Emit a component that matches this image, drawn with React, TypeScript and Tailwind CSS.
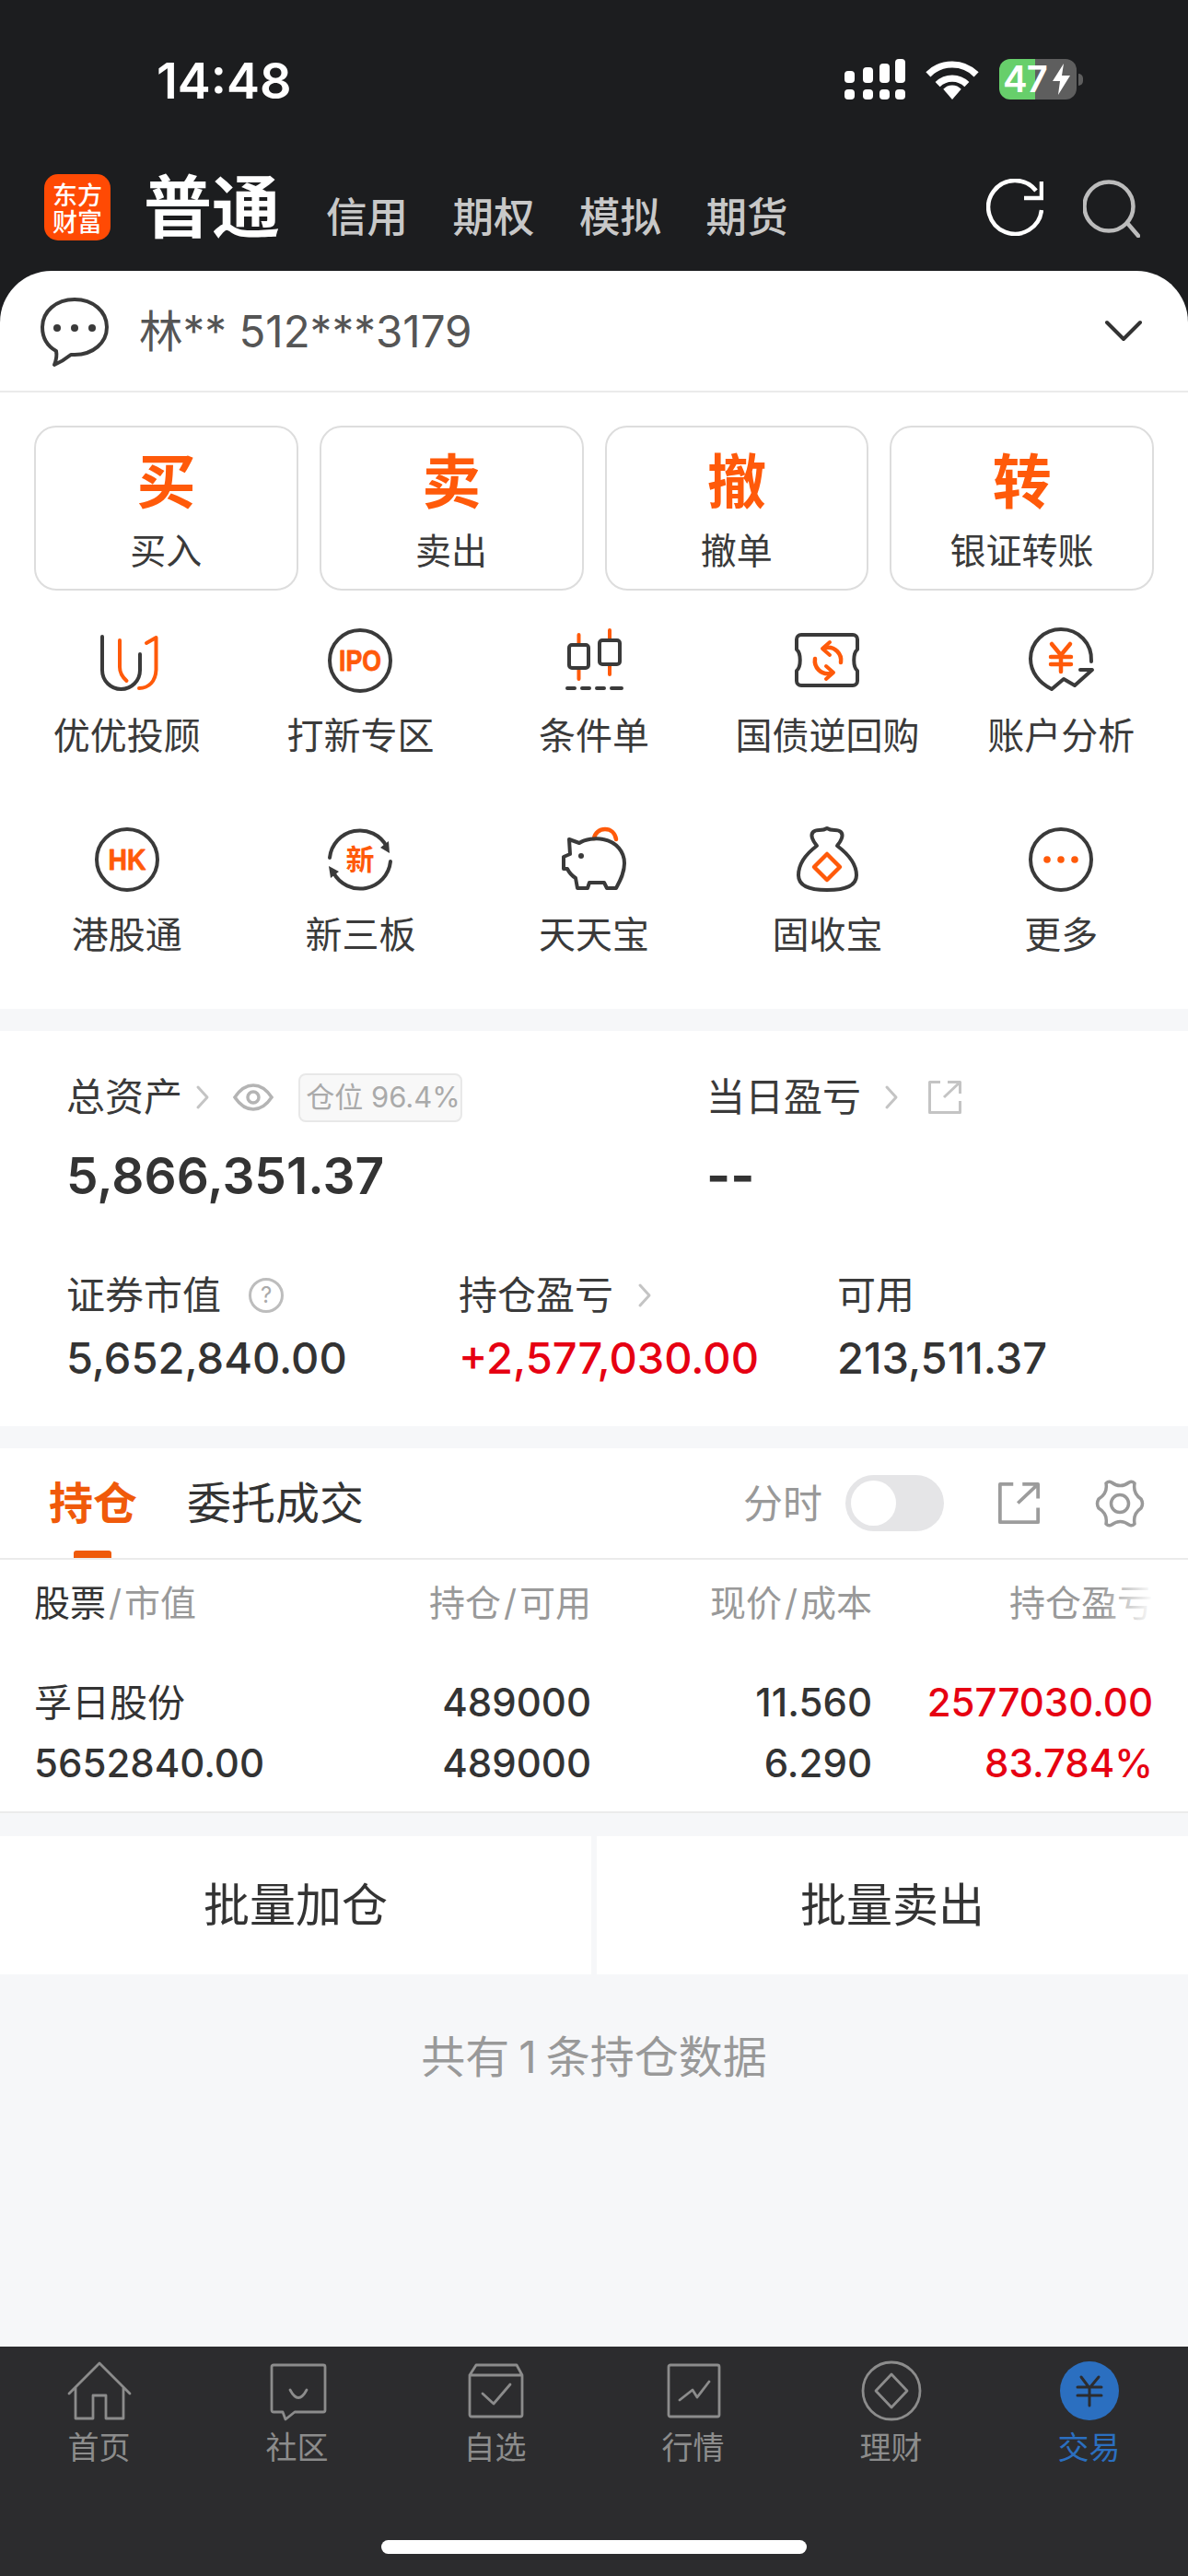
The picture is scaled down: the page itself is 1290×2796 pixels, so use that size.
import type { ReactNode } from "react";

const FONT = "font-['Inter','Noto_Sans_CJK_SC',sans-serif]";
const DARK = "#3a3a3a";
const ORANGE = "#ff5a0a";

function Icon({ children, size = 80 }: { children: ReactNode; size?: number }) {
  return (
    <svg width={size} height={size} viewBox={`0 0 ${size} ${size}`} fill="none" strokeLinecap="round" strokeLinejoin="round">
      {children}
    </svg>
  );
}

function SignalIcon() {
  return (
    <svg width="66" height="44" viewBox="0 0 66 44" fill="white">
      <rect x="0" y="13" width="11" height="13" rx="4" />
      <rect x="20" y="9" width="11" height="17" rx="4" />
      <rect x="38" y="5" width="11" height="21" rx="4" />
      <rect x="55" y="0" width="11" height="26" rx="4" />
      <rect x="0" y="33" width="11" height="11" rx="4" />
      <rect x="20" y="33" width="11" height="11" rx="4" />
      <rect x="38" y="33" width="11" height="11" rx="4" />
      <rect x="55" y="33" width="11" height="11" rx="4" />
    </svg>
  );
}

function WifiIcon() {
  return (
    <svg width="60" height="43" viewBox="0 0 57 42" fill="none" stroke="white">
      <path d="M3 15.5A36 36 0 0 1 54 15.5" strokeWidth="7" />
      <path d="M13 26A22 22 0 0 1 44 26" strokeWidth="7" />
      <path d="M28.5 42L19 31A13 13 0 0 1 38 31Z" fill="white" stroke="none" />
    </svg>
  );
}

function Battery() {
  return (
    <div className="flex items-center gap-[2px]">
      <div className="w-[84px] h-[44px] rounded-[12px] flex items-center pl-[4px] gap-[6px] bg-[linear-gradient(90deg,#67cf6b_46%,#5e5e5e_46%)]">
        <span className="text-[40px] leading-none font-semibold tracking-[-1px] text-white">47</span>
        <svg width="19" height="34" viewBox="0 0 19 34" fill="white">
          <path d="M12 0L0 19H8L6 34L19 13H10Z" />
        </svg>
      </div>
      <div className="w-[5px] h-[13px] rounded-r-full bg-[#5e5e5e]" />
    </div>
  );
}

function Logo() {
  return (
    <div className="w-[72px] h-[72px] rounded-[15px] bg-[#ff4a04] flex items-center justify-center text-white font-medium text-[27px] leading-[29px] font-['Noto_Sans_CJK_SC',sans-serif]">
      <p className="w-[54px] text-center break-all">东方财富</p>
    </div>
  );
}

function ReloadIcon() {
  return (
    <svg width="62" height="62" viewBox="0 0 62 62" fill="none" stroke="white" strokeWidth="4.5">
      <path d="M60 34A29 29 0 1 1 54 13" />
      <path d="M60 3V21H41" />
    </svg>
  );
}

function SearchIcon() {
  return (
    <svg width="62" height="64" viewBox="0 0 62 64" fill="none" stroke="#bcbcbc" strokeWidth="4.5" strokeLinecap="round">
      <circle cx="28" cy="30" r="26.5" />
      <path d="M48 48L60 62" />
    </svg>
  );
}

function ChatIcon() {
  return (
    <Icon>
      <path
        d="M40 4C20 4 5 17 5 34C5 46 11 55 20 60C21 65 20 70 18 75C25 72 31 68 36 64C38 64 39 64 40 64C60 64 75 51 75 34C75 17 60 4 40 4Z"
        stroke={DARK}
        strokeWidth="4"
      />
      <circle cx="21" cy="35" r="4" fill={DARK} />
      <circle cx="40" cy="35" r="4" fill={DARK} />
      <circle cx="59" cy="35" r="4" fill={DARK} />
    </Icon>
  );
}

function YouyouIcon() {
  return (
    <Icon>
      <path d="M13 14V50.5a20.5 20.5 0 0 0 41 0V33" stroke={DARK} strokeWidth="4" />
      <path d="M32 18V47c0 6 3 11 7.5 15" stroke={ORANGE} strokeWidth="4" />
      <path d="M53 70c11 0 18-8 18.5-20V15L61 21" stroke={ORANGE} strokeWidth="4" />
    </Icon>
  );
}

function LabelCircle({ label }: { label: string }) {
  return (
    <Icon>
      <circle cx="40" cy="40" r="33" stroke={DARK} strokeWidth="4" />
      <text
        x="40"
        y="51"
        textAnchor="middle"
        fontSize="32"
        fontWeight="700"
        fill={ORANGE}
        stroke={ORANGE}
        strokeWidth="0.8"
        fontFamily="Liberation Sans"
        textLength={label.length === 3 ? 46 : 41}
        lengthAdjust="spacingAndGlyphs"
      >
        {label}
      </text>
    </Icon>
  );
}

function CandleIcon() {
  return (
    <Icon>
      <path d="M23.5 12V23M23.5 48V60M57 7V18M57 44V55" stroke={ORANGE} strokeWidth="4" />
      <rect x="13" y="23" width="21" height="25" rx="3" stroke={DARK} strokeWidth="4" />
      <rect x="46" y="18" width="22" height="26" rx="3" stroke={DARK} strokeWidth="4" />
      <path d="M11 70H19M27 70H35M43 70H51M59 70H70" stroke={DARK} strokeWidth="4" />
    </Icon>
  );
}

function RepoIcon() {
  return (
    <Icon>
      <path
        d="M11 12H67a5 5 0 0 1 5 5V28C67 32 67 47 72 51V62a5 5 0 0 1-5 5H11a5 5 0 0 1-5-5V51C11 47 11 32 6 28V17a5 5 0 0 1 5-5Z"
        stroke={DARK}
        strokeWidth="4"
      />
      <path d="M54 42A14 14 0 0 0 38 26" stroke={ORANGE} strokeWidth="4.5" />
      <path d="M42 20L34 27L42 34" stroke={ORANGE} strokeWidth="4" />
      <path d="M26 38A14 14 0 0 0 42 54" stroke={ORANGE} strokeWidth="4.5" />
      <path d="M38 46L46 53L38 60" stroke={ORANGE} strokeWidth="4" />
    </Icon>
  );
}

function AnalysisIcon() {
  return (
    <Icon>
      <path d="M73 41C74 21 59 6 40 6C22 6 7 20 7 38C7 52 16 64 30 71L43 60L55 67L74 50H61" stroke={DARK} strokeWidth="4" />
      <path d="M30 22L40 34L50 22M40 34V52M29 36H51M29 44H51" stroke={ORANGE} strokeWidth="4.5" />
    </Icon>
  );
}

function NewBoardIcon() {
  return (
    <Icon>
      <path d="M7 38A33 33 0 0 1 69 26" stroke={DARK} strokeWidth="4" />
      <path d="M72 33L62 27L71 20Z" fill={DARK} />
      <path d="M73 42A33 33 0 0 1 11 54" stroke={DARK} strokeWidth="4" />
      <path d="M6 47L17 53L8 60Z" fill={DARK} />
      <text x="40" y="51" textAnchor="middle" fontSize="31" fontWeight="700" fill={ORANGE} fontFamily="Noto Sans CJK SC">
        新
      </text>
    </Icon>
  );
}

function PigIcon() {
  return (
    <Icon>
      <path d="M40 17C41 11 46 7 52 7C58 7 63 11 64 18" stroke={ORANGE} strokeWidth="4.5" />
      <path
        d="M13 18L24 22C30 18 42 16 50 18C65 21 73 32 73 44C73 54 69 62 64 71H54L51 65H35L33 71H22L20 60C15 57 13 54 11 50H7V37L14 34Z"
        stroke={DARK}
        strokeWidth="4"
      />
      <circle cx="26" cy="36" r="3" fill={DARK} />
    </Icon>
  );
}

function BagIcon() {
  return (
    <Icon>
      <path
        d="M28 25C24 20 20 14 24 10C28 6 33 10 39 6C45 10 50 6 54 10C58 14 54 20 50 25C62 34 71 45 71 57C71 68 60 73 39 73C18 73 8 68 8 57C8 45 16 34 28 25Z"
        stroke={DARK}
        strokeWidth="4"
      />
      <path d="M39 34L53 48L39 62L25 48Z" stroke={ORANGE} strokeWidth="4.5" />
    </Icon>
  );
}

function MoreIcon() {
  return (
    <Icon>
      <circle cx="40" cy="40" r="33" stroke={DARK} strokeWidth="4" />
      <circle cx="25" cy="40" r="3.8" fill={ORANGE} />
      <circle cx="40" cy="40" r="3.8" fill={ORANGE} />
      <circle cx="55" cy="40" r="3.8" fill={ORANGE} />
    </Icon>
  );
}

function Chevron() {
  return (
    <svg width="16" height="30" viewBox="0 0 16 30" fill="none" stroke="#c4c4c4" strokeWidth="3" strokeLinecap="round" strokeLinejoin="round">
      <path d="M3 4L13 15L3 26" />
    </svg>
  );
}

function EyeIcon() {
  return (
    <svg width="44" height="30" viewBox="0 0 44 30" fill="none" stroke="#b4b4b4" strokeWidth="3.5">
      <path d="M2 15C8 6 15 2 22 2C29 2 36 6 42 15C36 24 29 28 22 28C15 28 8 24 2 15Z" />
      <circle cx="22" cy="15" r="6" />
    </svg>
  );
}

function ExternalIcon({ size, color, width }: { size: number; color: string; width: number }) {
  return (
    <svg width={size} height={size} viewBox="0 0 36 36" fill="none" stroke={color} strokeWidth={width} strokeLinejoin="round">
      <path d="M13 1.5H1.5V34.5H34.5V22" />
      <path d="M17 18L34.5 1.5M21 1.5H34.5V14" />
    </svg>
  );
}

function HelpIcon() {
  return (
    <div className="w-[38px] h-[38px] rounded-full border-[3px] border-[#bdbdbd] flex items-center justify-center text-[24px] leading-none text-[#aaaaaa]">
      ?
    </div>
  );
}

function GearIcon() {
  return (
    <svg width="56" height="52" viewBox="0 0 56 52" fill="none" stroke="#999999" strokeWidth="3.5" strokeLinejoin="round">
      <path d="M14 4Q17 1 20 3Q29.5 10 39 3Q42 1 45 4Q43 15 52 21Q55 26 52 31Q43 37 45 48Q42 51 39 49Q29.5 42 20 49Q17 51 14 48Q16 37 6 31Q3 26 6 21Q16 15 14 4Z" />
      <circle cx="29" cy="26" r="9.5" />
    </svg>
  );
}

const tradeActions = [
  { char: "买", label: "买入" },
  { char: "卖", label: "卖出" },
  { char: "撤", label: "撤单" },
  { char: "转", label: "银证转账" },
];

const menuItems = [
  { label: "优优投顾", icon: <YouyouIcon /> },
  { label: "打新专区", icon: <LabelCircle label="IPO" /> },
  { label: "条件单", icon: <CandleIcon /> },
  { label: "国债逆回购", icon: <RepoIcon /> },
  { label: "账户分析", icon: <AnalysisIcon /> },
  { label: "港股通", icon: <LabelCircle label="HK" /> },
  { label: "新三板", icon: <NewBoardIcon /> },
  { label: "天天宝", icon: <PigIcon /> },
  { label: "固收宝", icon: <BagIcon /> },
  { label: "更多", icon: <MoreIcon /> },
];

const GRAY = "#8c8c8c";

const tabs = [
  {
    label: "首页",
    icon: (
      <Icon size={72}>
        <path d="M3 39L36 6L69 39M10 33V66H29V41H43V66H62V33" stroke={GRAY} strokeWidth="2.8" />
      </Icon>
    ),
  },
  {
    label: "社区",
    icon: (
      <Icon size={72}>
        <path d="M10 8H64a2 2 0 0 1 2 2V57a2 2 0 0 1-2 2H33L23 67L20 59H10a2 2 0 0 1-2-2V10a2 2 0 0 1 2-2Z" stroke={GRAY} strokeWidth="2.8" />
        <path d="M28 35Q37 52 46 35" stroke={GRAY} strokeWidth="2.8" />
      </Icon>
    ),
  },
  {
    label: "自选",
    icon: (
      <Icon size={72}>
        <path d="M8 19L15 8H59L65 19M8 19H65V62a2 2 0 0 1-2 2H10a2 2 0 0 1-2-2Z" stroke={GRAY} strokeWidth="2.8" />
        <path d="M22 39L34 50L52 29" stroke={GRAY} strokeWidth="2.8" />
      </Icon>
    ),
  },
  {
    label: "行情",
    icon: (
      <Icon size={72}>
        <rect x="9" y="8" width="55" height="56" rx="2" stroke={GRAY} strokeWidth="2.8" />
        <path d="M21 46L35 35L40 43L53 26" stroke={GRAY} strokeWidth="2.8" />
      </Icon>
    ),
  },
  {
    label: "理财",
    icon: (
      <Icon size={72}>
        <circle cx="36" cy="36" r="31" stroke={GRAY} strokeWidth="2.8" />
        <path d="M36 18L53 36L36 54L19 36Z" stroke={GRAY} strokeWidth="2.8" />
      </Icon>
    ),
  },
  {
    label: "交易",
    active: true,
    icon: (
      <Icon size={72}>
        <circle cx="36" cy="36" r="32" fill="#2b6fc0" />
        <path d="M27 21L36 33L46 21M36 33V52M23 32H49M23 41H49" stroke="#2c2c2e" strokeWidth="3" />
      </Icon>
    ),
  },
];

export default function App() {
  return (
    <div className={`w-[1290px] h-[2796px] flex flex-col overflow-hidden bg-[#f6f7f9] ${FONT}`}>
      <div className="bg-[#1c1d1f]">
        <div className="h-[189px] flex items-start justify-between pt-[58px] pl-[170px] pr-[114px]">
          <span className="text-[54px] leading-[60px] font-semibold text-white">14:48</span>
          <div className="flex items-center gap-[21px] pt-[6px]">
            <SignalIcon />
            <WifiIcon />
            <Battery />
          </div>
        </div>
        <div className="h-[105px] flex items-start pl-[48px] pr-[52px]">
          <Logo />
          <span className="ml-[36px] text-[74px] leading-[72px] font-bold text-white">普通</span>
          <div className="ml-[50px] mt-[17px] flex gap-[48.5px] text-[44.5px] leading-[60px] font-medium text-[#c8c8c8]">
            <span>信用</span>
            <span>期权</span>
            <span>模拟</span>
            <span>期货</span>
          </div>
          <div className="ml-auto flex items-start gap-[43px] mt-[5px]">
            <ReloadIcon />
            <SearchIcon />
          </div>
        </div>
        <div className="h-[132px] rounded-t-[56px] bg-white border-b-2 border-[#ebebeb] flex items-center pl-[41px] pr-[50px]">
          <div className="mt-[4px]">
            <ChatIcon />
          </div>
          <span className="ml-[30px] mt-[2px] text-[47.5px] leading-[60px] text-[#555555]">林** 512***3179</span>
          <svg className="ml-auto" width="40" height="24" viewBox="0 0 40 24" fill="none" stroke="#333333" strokeWidth="4" strokeLinecap="round" strokeLinejoin="round">
            <path d="M2 3L20 21L38 3" />
          </svg>
        </div>
      </div>

      <div className="bg-white h-[669px] flex flex-col">
        <div className="flex gap-[23px] px-[37px] pt-[36px]">
          {tradeActions.map((a) => (
            <div key={a.char} className="flex-1 h-[179px] rounded-[24px] border-2 border-[#dddddd] flex flex-col items-center pt-[18px]">
              <span className="text-[64px] leading-[82px] font-bold text-[#ff5a0a]">{a.char}</span>
              <span className="mt-[9px] text-[39px] leading-[50px] text-[#3a3a3a]">{a.label}</span>
            </div>
          ))}
        </div>
        <div className="grid grid-cols-5 gap-y-[66px] px-[11px] pt-[36px]">
          {menuItems.map((m) => (
            <div key={m.label} className="flex flex-col items-center gap-[14px]">
              {m.icon}
              <span className="text-[40px] leading-[56px] text-[#3a3a3a] whitespace-nowrap">{m.label}</span>
            </div>
          ))}
        </div>
      </div>

      <div className="mt-[24px] bg-white h-[429px] pl-[72px]">
        <div className="flex pt-[44px]">
          <div className="w-[695px]">
            <div className="flex items-center h-[56px]">
              <span className="text-[42px] leading-[56px] text-[#3a3a3a]">总资产</span>
              <div className="ml-[14px]"><Chevron /></div>
              <div className="ml-[25px]"><EyeIcon /></div>
              <div className="ml-[27px] w-[178px] h-[53px] pl-[6px] rounded-[8px] border-2 border-[#e8e8e8] bg-[#f8f8f8] flex items-center justify-center text-[31px] text-[#aaaaaa] whitespace-nowrap">
                仓位 96.4%
              </div>
            </div>
            <div className="mt-[23px] text-[55px] leading-[68px] font-semibold text-[#333333]">5,866,351.37</div>
          </div>
          <div>
            <div className="flex items-center h-[56px]">
              <span className="text-[42px] leading-[56px] text-[#3a3a3a]">当日盈亏</span>
              <div className="ml-[25px]"><Chevron /></div>
              <div className="ml-[32px]"><ExternalIcon size={36} color="#c4c4c4" width={3} /></div>
            </div>
            <div className="mt-[23px] text-[56px] leading-[68px] font-bold text-[#333333]">--</div>
          </div>
        </div>
        <div className="flex pt-[68px]">
          <div className="w-[426px]">
            <div className="flex items-center h-[56px]">
              <span className="text-[42px] leading-[56px] text-[#3a3a3a]">证券市值</span>
              <div className="ml-[30px]"><HelpIcon /></div>
            </div>
            <div className="mt-[11px] text-[47px] leading-[58px] font-medium text-[#333333]">5,652,840.00</div>
          </div>
          <div className="w-[411px]">
            <div className="flex items-center h-[56px]">
              <span className="text-[42px] leading-[56px] text-[#3a3a3a]">持仓盈亏</span>
              <div className="ml-[26px]"><Chevron /></div>
            </div>
            <div className="mt-[11px] text-[47px] leading-[58px] font-medium text-[#e60012]">+2,577,030.00</div>
          </div>
          <div>
            <div className="flex items-center h-[56px]">
              <span className="text-[42px] leading-[56px] text-[#3a3a3a]">可用</span>
            </div>
            <div className="mt-[11px] text-[47px] leading-[58px] font-medium text-[#333333]">213,511.37</div>
          </div>
        </div>
      </div>

      <div className="mt-[24px] bg-white h-[396px] border-b-2 border-[#ebebeb]">
        <div className="h-[121px] border-b-2 border-[#ebebeb] flex items-center pl-[53px] pr-[47px] relative">
          <span className="text-[48px] leading-[60px] font-semibold text-[#f05a0a]">持仓</span>
          <span className="ml-[54px] text-[48px] leading-[60px] text-[#333333]">委托成交</span>
          <span className="ml-auto text-[43px] leading-[60px] text-[#999999]">分时</span>
          <div className="ml-[25px] w-[107px] h-[61px] rounded-full bg-[#e5e5e7] flex items-center pl-[6px]">
            <div className="w-[49px] h-[49px] rounded-full bg-white" />
          </div>
          <div className="ml-[59px]"><ExternalIcon size={45} color="#9c9c9c" width={3} /></div>
          <div className="ml-[58px]"><GearIcon /></div>
          <div className="absolute left-[80px] bottom-0 w-[41px] h-[8px] rounded-t-[3px] bg-[#ef5a0a]" />
        </div>
        <div className="relative h-[56px] mt-[19px] grid grid-cols-[428px_177px_305px_305px] pl-[37px] text-[39px] leading-[56px] text-[#999999]">
          <span><span className="text-[#333333]">股票</span><span className="mx-[3px]">/</span>市值</span>
          <span className="text-right whitespace-nowrap">持仓<span className="mx-[3px]">/</span>可用</span>
          <span className="text-right whitespace-nowrap">现价<span className="mx-[3px]">/</span>成本</span>
          <span className="text-right whitespace-nowrap">持仓盈亏</span>
          <div className="absolute right-[38px] top-0 w-[56px] h-full bg-[linear-gradient(90deg,rgba(255,255,255,0),white)]" />
        </div>
        <div className="mt-[47px] grid grid-cols-[428px_177px_305px_305px] pl-[37px] text-[42px] leading-[66px] font-medium text-[#333333]">
          <span className="font-normal text-[41px]">孚日股份</span>
          <span className="text-right">489000</span>
          <span className="text-right">11.560</span>
          <span className="text-right text-[#e60012]">2577030.00</span>
          <span>5652840.00</span>
          <span className="text-right">489000</span>
          <span className="text-right">6.290</span>
          <span className="text-right text-[#e60012]">83.784%</span>
        </div>
      </div>

      <div className="mt-[25px] h-[150px] flex justify-between">
        <div className="w-[642px] bg-white flex items-center justify-center text-[50px] text-[#333333]">批量加仓</div>
        <div className="w-[642px] bg-white flex items-center justify-center text-[50px] text-[#333333]">批量卖出</div>
      </div>

      <div className="flex-1 flex justify-center pt-[60px]">
        <span className="text-[48px] leading-[60px] text-[#999999]">
          共有<span className="mx-[10px]">1</span>条持仓数据
        </span>
      </div>

      <div className="h-[249px] bg-[#2c2c2e] flex flex-col">
        <div className="grid grid-cols-6 pt-[12px]">
          {tabs.map((t) => (
            <div key={t.label} className="flex flex-col items-center">
              {t.icon}
              <span className={`text-[34px] leading-[44px] mt-[4px] ${t.active ? "text-[#2b6fc0]" : "text-[#8c8c8c]"}`}>{t.label}</span>
            </div>
          ))}
        </div>
        <div className="mt-auto mb-[24px] mx-auto w-[462px] h-[15px] rounded-full bg-white" />
      </div>
    </div>
  );
}
